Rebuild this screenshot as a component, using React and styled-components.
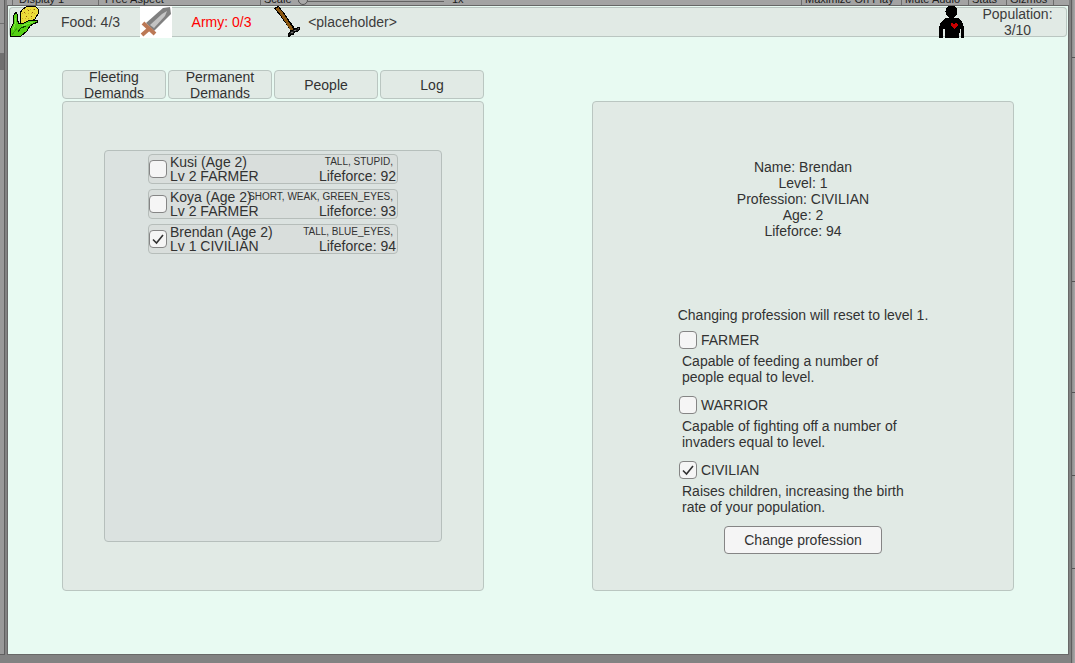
import React, { useState } from "react";
import styled, { createGlobalStyle } from "styled-components";

const GlobalStyle = createGlobalStyle`
  *, *::before, *::after { box-sizing: border-box; }
  body {
    margin: 0;
    background: #828282;
    color: #323232;
    font-family: "Liberation Sans", Arial, sans-serif;
    font-size: 14px;
    line-height: 16px;
  }
  button, input { font: inherit; color: inherit; margin: 0; }
`;

const EditorWindow = styled.div`
  display: grid;
  grid-template-columns: 7px minmax(0, 1fr) 6px;
  min-height: 100vh;
`;

const LeftDock = styled.div`
  width: 5px;
  margin-bottom: 8px;
  background: #999999;
  border-right: 1px solid #5f5f5f;
  border-bottom: 1px solid #5f5f5f;
`;

const LeftDockRow = styled.div`
  height: ${(p) => p.$height}px;
  background: ${(p) => (p.$selected ? "#707070" : "transparent")};
  border-bottom: 1px solid #707070;
`;

const RightDock = styled.div`
  margin-left: 2px;
  background: linear-gradient(to right, #8c8c8c, #a8a8a8);
  border-left: 1px solid #5f5f5f;
`;

const RightDockRow = styled.div`
  height: ${(p) => p.$height}px;
  border-bottom: 1px solid #555555;
`;

const ViewColumn = styled.div`
  display: flex;
  flex-direction: column;
  min-width: 0;
  padding-bottom: 8px;
`;

const EditorToolbar = styled.div`
  display: flex;
  justify-content: space-between;
  height: 6px;
  overflow: hidden;
  background: #a3a3a3;
  border-bottom: 1px solid #666666;
  color: #1c1c1c;
  font-size: 11px;
  line-height: 12px;
`;

const ToolbarGroup = styled.div`
  display: flex;
  height: 12px;
  margin-top: -7px;
  padding: 0 5px;
`;

const ToolbarItem = styled.span`
  width: ${(p) => p.$width}px;
  padding-left: ${(p) => (p.$tight ? 3 : 6)}px;
  border-left: 1px solid #6c6c6c;
  white-space: nowrap;
`;

const ScaleTrack = styled.span`
  width: 146px;
  height: 1px;
  margin: 8px 8px 0 0;
  background: #626262;
`;

const ScaleKnob = styled.span`
  display: block;
  width: 10px;
  height: 10px;
  margin-top: -6px;
  border: 1px solid #555555;
  border-radius: 50%;
  background: #a9a9a9;
`;

const GameView = styled.main`
  display: flex;
  flex: 1;
  flex-direction: column;
  background: #e8faf2;
  border: solid #686868;
  border-width: 0 1px 1px;
  padding: 1px 0 63px;
`;

const Hud = styled.header`
  display: flex;
  align-items: center;
  height: 30px;
  margin: 0 1px;
  background: #e1eae5;
  border-radius: 4px;
  box-shadow: inset 0 0 0 1px #bac6c1;
`;

const Stat = styled.div`
  display: flex;
  align-items: center;
  width: 131px;
  margin-left: ${(p) => (p.$end ? "auto" : "0")};
  color: ${(p) => (p.$alert ? "#ff0000" : "#3c3c3c")};
`;

const StatIcon = styled.svg`
  flex: none;
  width: 32px;
  height: 32px;
  overflow: visible;
`;

const StatText = styled.span`
  flex: 1;
  padding: 0 2px;
  text-align: center;
`;

const Columns = styled.div`
  display: grid;
  flex: 1;
  grid-template-columns: minmax(0, 1fr) minmax(0, 1fr);
  gap: 108px;
  padding: 33px 54px 0;
`;

const Column = styled.section`
  display: flex;
  flex-direction: column;
  gap: 2px;
  padding-top: ${(p) => (p.$lowered ? 31 : 0)}px;
`;

const Tabs = styled.nav`
  display: flex;
  gap: 2px;
  height: 29px;
`;

const Tab = styled.button`
  display: flex;
  flex: 1 1 0;
  align-items: center;
  justify-content: center;
  min-width: 0;
  padding: 0 8px;
  background: #e1eae5;
  border: 1px solid #bac6c1;
  border-radius: 4px;
  line-height: 16px;
  text-align: center;
`;

const Panel = styled.div`
  display: flex;
  flex: 1;
  flex-direction: column;
  align-items: ${(p) => (p.$centered ? "center" : "stretch")};
  padding: ${(p) => (p.$centered ? "57px 40px 36px" : "48px 41px")};
  background: #e1eae5;
  border: 1px solid #bac6c1;
  border-radius: 4px;
`;

const PeopleList = styled.ul`
  display: flex;
  flex: 1;
  flex-direction: column;
  align-items: center;
  gap: 5px;
  margin: 0;
  padding: 3px;
  list-style: none;
  background: #dbe2e0;
  border: 1px solid #b6bfbc;
  border-radius: 4px;
`;

const PersonRow = styled.label`
  display: flex;
  align-items: center;
  gap: 3px;
  width: 250px;
  height: 30px;
  padding-right: 1px;
  background: #d9dedc;
  border: 1px solid #b6bdba;
  border-radius: 4px;
  line-height: 14px;
  white-space: nowrap;
`;

const PersonIdentity = styled.span`
  display: flex;
  flex: 1;
  flex-direction: column;
`;

const PersonDetails = styled.span`
  display: flex;
  flex-direction: column;
  align-items: flex-end;
  width: 80px;
`;

const Traits = styled.small`
  padding-right: 3px;
  font-size: 10px;
`;

const TickFrame = styled.span`
  position: relative;
  flex: none;
  width: 18px;
  height: 18px;
`;

const TickInput = styled.input`
  display: block;
  appearance: none;
  width: 18px;
  height: 18px;
  background: #f5f5f5;
  border: 1px solid #858585;
  border-radius: 4px;
`;

const TickMark = styled.svg`
  position: absolute;
  inset: 0;
  pointer-events: none;
`;

const Summary = styled.div`
  margin-bottom: 68px;
  text-align: center;
`;

const Notice = styled.p`
  margin: 0 0 8px;
  white-space: nowrap;
`;

const ProfessionList = styled.div`
  display: flex;
  flex-direction: column;
  gap: 11px;
  width: 248px;
  margin-bottom: 11px;
`;

const ProfessionLabel = styled.label`
  display: flex;
  align-items: center;
  gap: 4px;
`;

const ProfessionText = styled.p`
  margin: 4px 8px 0 3px;
`;

const ActionButton = styled.button`
  width: 158px;
  height: 28px;
  padding: 0;
  background: #f5f5f5;
  border: 1px solid #858585;
  border-radius: 4px;
`;

function Tick({ checked, ...rest }) {
  return (
    <TickFrame>
      <TickInput type="checkbox" checked={checked} {...rest} />
      {checked && (
        <TickMark viewBox="0 0 18 18" aria-hidden="true">
          <path d="M4 9.5 L7.5 13 L14 5" fill="none" stroke="#323232" strokeWidth="1.6" />
        </TickMark>
      )}
    </TickFrame>
  );
}

function CornIcon() {
  return (
    <StatIcon viewBox="0 0 32 32" shapeRendering="crispEdges" aria-hidden="true">
      <path d="M11 13V7L13 4L17 1L21 0H26L29 3V8L26 13L20 17L12 18Z" fill="#ecdc3a" stroke="#000" />
      <path d="M13 7H27M15 3H26M13 12H25" stroke="#d0b024" strokeDasharray="1 2" />
      <path d="M15 6h1M19 4h1M23 6h1M17 10h1M22 10h1M25 3h1" stroke="#96560e" />
      <path d="M1 31V24L4 18L5 9L7 6L8 8V13L10 18L15 17L21 14L28 14L29 16L24 18L21 20L18 25L12 30Z" fill="#55cf14" stroke="#000" />
      <path d="M6 12V18L4 24" fill="none" stroke="#7be83a" />
      <path d="M13 20L18 18L24 16" fill="none" stroke="#7be83a" />
      <path d="M9 26L12 22L17 20" fill="none" stroke="#0b3f00" />
      <path d="M3 29L8 22" stroke="#3aa80d" />
    </StatIcon>
  );
}

function SwordIcon() {
  return (
    <StatIcon viewBox="0 0 32 32" aria-hidden="true">
      <rect width="32" height="32" fill="#fff" />
      <path d="M23 2L30 1L31 8L14 25L6 17Z" fill="#808080" />
      <path d="M10 19L22 8L27 5L25 10L14 22Z" fill="#c3c3c3" />
      <path d="M3 17L15 28M10 22L2 29" fill="none" stroke="#bb7855" strokeWidth="4" />
    </StatIcon>
  );
}

function HoeIcon() {
  return (
    <StatIcon viewBox="0 0 32 32" shapeRendering="crispEdges" aria-hidden="true">
      <path d="M5 1L11 8L22 24" fill="none" stroke="#000" strokeWidth="5" />
      <path d="M6 2L11 8L21 24" fill="none" stroke="#8a5710" strokeWidth="3" />
      <path d="M17 29L20 25L28 21L29 23L26 26L24 25L22 29L20 28L18 31Z" fill="#202020" stroke="#000" />
      <path d="M20 27L28 22" stroke="#777" strokeDasharray="2 2" />
    </StatIcon>
  );
}

function PersonIcon() {
  return (
    <StatIcon viewBox="0 0 32 32" shapeRendering="crispEdges" aria-hidden="true">
      <circle cx="15.5" cy="5.5" r="6" />
      <path d="M13 10H18V12H22L26 16L28 21V32H25V23H24L23 32H9V23H7V32H3V21L5 16L9 12H13Z" />
      <path d="M15 18V17H17V18H19V17H21V18H22V20H21V21H20V22H19V23H18V22H17V21H16V20H15Z" fill="#c80000" />
    </StatIcon>
  );
}

const people = [
  { name: "Kusi", age: 2, level: 2, job: "FARMER", traits: "TALL, STUPID,", life: 92 },
  { name: "Koya", age: 2, level: 2, job: "FARMER", traits: "SHORT, WEAK, GREEN_EYES,", life: 93 },
  { name: "Brendan", age: 2, level: 1, job: "CIVILIAN", traits: "TALL, BLUE_EYES,", life: 94 },
];

const professions = [
  { name: "FARMER", text: "Capable of feeding a number of people equal to level." },
  { name: "WARRIOR", text: "Capable of fighting off a number of invaders equal to level." },
  { name: "CIVILIAN", text: "Raises children, increasing the birth rate of your population." },
];

const tabs = ["Fleeting Demands", "Permanent Demands", "People", "Log"];

export default function App() {
  const [selected, setSelected] = useState("Brendan");
  const [profession, setProfession] = useState("CIVILIAN");
  const person = people.find((p) => p.name === selected);

  return (
    <>
      <GlobalStyle />
      <EditorWindow>
        <LeftDock>
          <LeftDockRow $height={24} />
          <LeftDockRow $height={30} />
          <LeftDockRow $height={16} $selected />
        </LeftDock>
        <ViewColumn>
          <EditorToolbar>
            <ToolbarGroup>
              <ToolbarItem $width={86}>Display 1</ToolbarItem>
              <ToolbarItem $width={162}>Free Aspect</ToolbarItem>
              <ToolbarItem $width={38} $tight>Scale</ToolbarItem>
              <ScaleTrack><ScaleKnob /></ScaleTrack>
              <span>1x</span>
            </ToolbarGroup>
            <ToolbarGroup>
              <ToolbarItem $width={100} $tight>Maximize On Play</ToolbarItem>
              <ToolbarItem $width={67} $tight>Mute Audio</ToolbarItem>
              <ToolbarItem $width={38} $tight>Stats</ToolbarItem>
              <ToolbarItem $width={47} $tight>Gizmos</ToolbarItem>
              <ToolbarItem $width={11} $tight />
            </ToolbarGroup>
          </EditorToolbar>
          <GameView>
            <Hud>
              <Stat><CornIcon /><StatText>Food: 4/3</StatText></Stat>
              <Stat $alert><SwordIcon /><StatText>Army: 0/3</StatText></Stat>
              <Stat><HoeIcon /><StatText>&lt;placeholder&gt;</StatText></Stat>
              <Stat $end><PersonIcon /><StatText>Population: 3/10</StatText></Stat>
            </Hud>
            <Columns>
              <Column>
                <Tabs>
                  {tabs.map((t) => <Tab key={t} type="button">{t}</Tab>)}
                </Tabs>
                <Panel>
                  <PeopleList>
                    {people.map((p) => (
                      <li key={p.name}>
                        <PersonRow>
                          <Tick checked={selected === p.name} onChange={() => setSelected(p.name)} />
                          <PersonIdentity>
                            <span>{`${p.name} (Age ${p.age})`}</span>
                            <span>{`Lv ${p.level} ${p.job}`}</span>
                          </PersonIdentity>
                          <PersonDetails>
                            <Traits>{p.traits}</Traits>
                            <span>{`Lifeforce: ${p.life}`}</span>
                          </PersonDetails>
                        </PersonRow>
                      </li>
                    ))}
                  </PeopleList>
                </Panel>
              </Column>
              <Column $lowered>
                <Panel $centered>
                  <Summary>
                    <div>{`Name: ${person.name}`}</div>
                    <div>{`Level: ${person.level}`}</div>
                    <div>{`Profession: ${person.job}`}</div>
                    <div>{`Age: ${person.age}`}</div>
                    <div>{`Lifeforce: ${person.life}`}</div>
                  </Summary>
                  <Notice>Changing profession will reset to level 1.</Notice>
                  <ProfessionList>
                    {professions.map((p) => (
                      <div key={p.name}>
                        <ProfessionLabel>
                          <Tick checked={profession === p.name} onChange={() => setProfession(p.name)} />
                          {p.name}
                        </ProfessionLabel>
                        <ProfessionText>{p.text}</ProfessionText>
                      </div>
                    ))}
                  </ProfessionList>
                  <ActionButton type="button">Change profession</ActionButton>
                </Panel>
              </Column>
            </Columns>
          </GameView>
        </ViewColumn>
        <RightDock>
          <RightDockRow $height={58} />
          <RightDockRow $height={224} />
          <RightDockRow $height={111} />
          <RightDockRow $height={83} />
          <RightDockRow $height={93} />
        </RightDock>
      </EditorWindow>
    </>
  );
}
